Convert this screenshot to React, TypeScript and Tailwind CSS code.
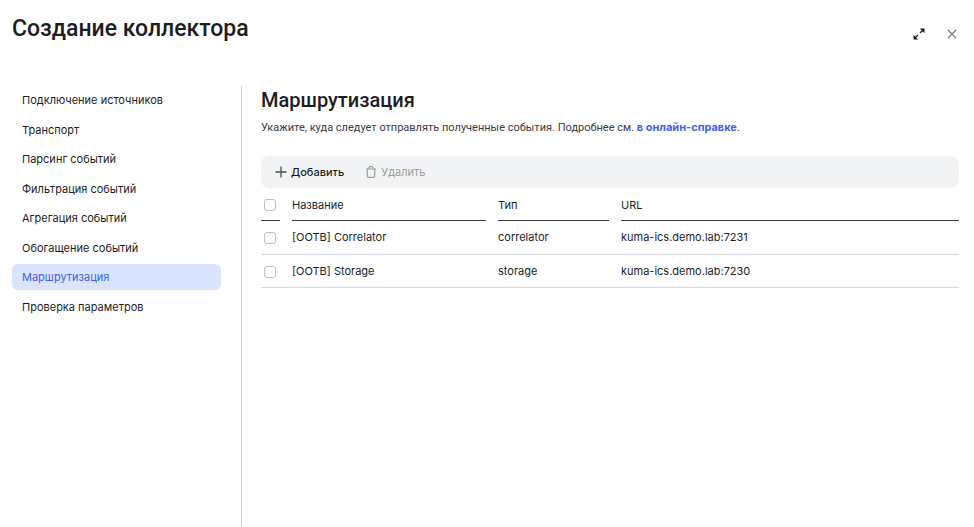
import React, { useState } from "react";

interface Destination {
  id: string;
  name: string;
  type: string;
  url: string;
}

const STEPS = [
  "Подключение источников",
  "Транспорт",
  "Парсинг событий",
  "Фильтрация событий",
  "Агрегация событий",
  "Обогащение событий",
  "Маршрутизация",
  "Проверка параметров",
];

const DESTINATIONS: Destination[] = [
  { id: "correlator", name: "[OOTB] Correlator", type: "correlator", url: "kuma-ics.demo.lab:7231" },
  { id: "storage", name: "[OOTB] Storage", type: "storage", url: "kuma-ics.demo.lab:7230" },
];

const ExpandIcon = () => (
  <svg className="w-3 h-3" viewBox="0 0 12 12" fill="none" stroke="currentColor" strokeWidth="1.2">
    <path d="M7 5l3-3M5 7l-3 3" />
    <path d="M6.8.5h4.7v4.7zM.5 6.8v4.7h4.7z" fill="currentColor" stroke="none" />
  </svg>
);

const CloseIcon = () => (
  <svg className="w-3 h-3" viewBox="0 0 12 12" fill="none" stroke="currentColor" strokeWidth="1.1">
    <path d="M2 2l8 8M10 2l-8 8" />
  </svg>
);

const PlusIcon = () => (
  <svg className="w-3 h-3" viewBox="0 0 12 12" fill="none" stroke="#4b4d51" strokeWidth="1.3">
    <path d="M6 .5v11M.5 6h11" />
  </svg>
);

const TrashIcon = () => (
  <svg className="w-3 h-3" viewBox="0 0 12 12" fill="none" stroke="currentColor" strokeWidth="1.2">
    <path d="M1 3h10M4 3V2q0-1.3 1.2-1.3h1.6Q8 .7 8 2v1M2.3 3v7q0 1.3 1.3 1.3h4.8q1.3 0 1.3-1.3V3" />
  </svg>
);

interface CheckProps {
  label: string;
  checked: boolean;
  onChange: () => void;
}

const Check = ({ label, checked, onChange }: CheckProps) => (
  <input
    type="checkbox"
    aria-label={label}
    checked={checked}
    onChange={onChange}
    className="block w-3 h-3 ml-[3px] appearance-none rounded-[3px] border border-[#b9bdc6] bg-white checked:bg-[#3f63e8] checked:border-[#3f63e8] cursor-pointer"
  />
);

export default function App() {
  const [step, setStep] = useState("Маршрутизация");
  const [selected, setSelected] = useState<string[]>([]);

  const toggle = (id: string) => {
    setSelected((prev) => (prev.includes(id) ? prev.filter((x) => x !== id) : [...prev, id]));
  };

  const allSelected = selected.length === DESTINATIONS.length;

  return (
    <div className="flex flex-col min-h-screen bg-white text-[#1d1d1f] text-[11px] leading-4 font-['Inter','Liberation_Sans',sans-serif]">
      <header className="flex items-start justify-between pl-3 pr-4 pt-[13px] pb-[41px]">
        <h1 className="text-[23px] leading-8 font-medium font-['Roboto','Liberation_Sans',sans-serif]">Создание коллектора</h1>
        <div className="flex items-center gap-[21px] pt-[15px]">
          <button type="button" aria-label="Развернуть" className="cursor-pointer">
            <ExpandIcon />
          </button>
          <button type="button" aria-label="Закрыть" className="text-[#70757f] cursor-pointer">
            <CloseIcon />
          </button>
        </div>
      </header>

      <div className="flex flex-1">
        <nav className="w-[242px] shrink-0 pt-px pl-3 pr-5 border-r border-[#ced2d9]">
          <ul className="flex flex-col justify-between h-[233px]">
            {STEPS.map((item) => (
              <li key={item}>
                <button
                  type="button"
                  onClick={() => setStep(item)}
                  className={`block w-full h-[26px] px-[10px] rounded-md text-left cursor-pointer ${
                    item === step ? "bg-[#dbe4ff] text-[#3f63e8]" : ""
                  }`}
                >
                  {item}
                </button>
              </li>
            ))}
          </ul>
        </nav>

        <main className="flex-1 min-w-0 pl-[19px] pr-[15px]">
          <h2 className="text-[20px] leading-7 font-medium font-['Roboto','Liberation_Sans',sans-serif]">Маршрутизация</h2>
          <p className="mt-[5px] text-[#3a3c40] font-['Roboto','Liberation_Sans',sans-serif]">
            Укажите, куда следует отправлять полученные события. Подробнее см.{" "}
            <a href="#help" className="font-bold text-[#3f63e8] font-['Inter','Liberation_Sans',sans-serif]">
              в онлайн-справке
            </a>
            .
          </p>

          <div className="flex items-center gap-[21px] h-8 mt-5 px-[14px] rounded-lg bg-[#f2f3f5]">
            <button type="button" className="flex items-center gap-1 font-medium cursor-pointer">
              <PlusIcon />
              Добавить
            </button>
            <button type="button" disabled={selected.length === 0} className="flex items-center gap-1 disabled:text-[#9a9ea6]">
              <TrashIcon />
              Удалить
            </button>
          </div>

          <table className="w-full table-fixed border-collapse text-left">
            <colgroup>
              <col className="w-[31px]" />
              <col className="w-[206px]" />
              <col className="w-[123px]" />
              <col />
            </colgroup>
            <thead>
              <tr>
                <th className="p-0 pr-3 font-normal">
                  <div className="flex items-center h-[33px] pt-0.5 border-b border-[#3c3c3e]">
                    <Check
                      label="Выбрать все"
                      checked={allSelected}
                      onChange={() => setSelected(allSelected ? [] : DESTINATIONS.map((d) => d.id))}
                    />
                  </div>
                </th>
                <th className="p-0 pr-3 font-normal">
                  <div className="flex items-center h-[33px] pt-0.5 border-b border-[#3c3c3e]">Название</div>
                </th>
                <th className="p-0 pr-3 font-normal">
                  <div className="flex items-center h-[33px] pt-0.5 border-b border-[#3c3c3e]">Тип</div>
                </th>
                <th className="p-0 font-normal">
                  <div className="flex items-center h-[33px] pt-0.5 border-b border-[#3c3c3e]">URL</div>
                </th>
              </tr>
            </thead>
            <tbody>
              {DESTINATIONS.map((d) => (
                <tr key={d.id} className="h-[33px] border-b border-[#d5d8df]">
                  <td className="p-0 pt-0.5">
                    <Check label={d.name} checked={selected.includes(d.id)} onChange={() => toggle(d.id)} />
                  </td>
                  <td className="p-0">{d.name}</td>
                  <td className="p-0">{d.type}</td>
                  <td className="p-0">{d.url}</td>
                </tr>
              ))}
            </tbody>
          </table>
        </main>
      </div>
    </div>
  );
}
